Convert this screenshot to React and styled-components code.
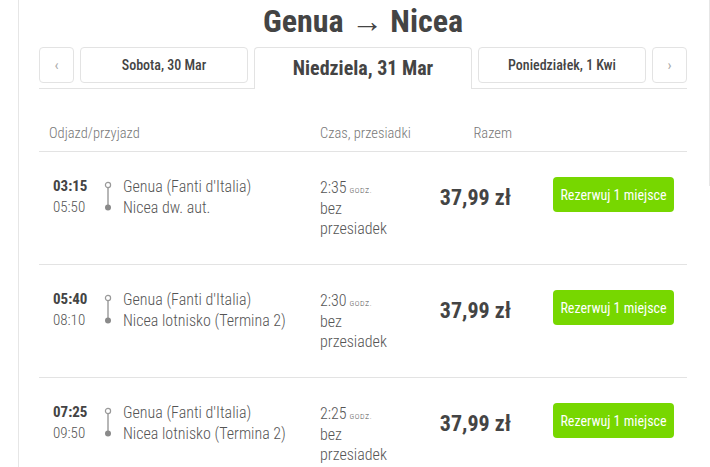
import React from "react";
import styled, { createGlobalStyle } from "styled-components";

const Global = createGlobalStyle`
  html, body { margin: 0; padding: 0; background: #fff; }
  body {
    font-family: "Roboto Condensed", Roboto, "Liberation Sans", sans-serif;
    font-stretch: condensed;
    color: #444;
    overflow: hidden;
  }
  * { box-sizing: border-box; }
`;

const Page = styled.div`
  display: flex;
  align-items: flex-start;
  width: 710px;
  height: 467px;
  overflow: hidden;
`;

const Main = styled.main`
  margin-left: 18px;
  width: 691px;
  height: 467px;
  border-left: 1px solid #e6e6e6;
  padding: 0 22px 0 20px;
`;

const Side = styled.aside`
  width: 12px;
  height: 186px;
  border-left: 1px solid #e6e6e6;
  border-bottom: 1px solid #e6e6e6;
  border-bottom-left-radius: 4px;
`;

const Title = styled.h1`
  margin: 0;
  padding-top: 2px;
  height: 47px;
  text-align: center;
  font-size: 32px;
  line-height: 38px;
  font-weight: 700;
  color: #444;
`;

const Tabs = styled.div`
  display: flex;
  gap: 6px;
  align-items: flex-start;
  border-bottom: 1px solid #e3e3e3;
  height: 42px;
`;

const Tab = styled.button`
  font-family: inherit;
  font-stretch: condensed;
  background: #fff;
  border: 1px solid #e3e3e3;
  border-radius: 4px;
  height: 36px;
  width: ${(p) => p.$w}px;
  flex: none;
  padding: 0;
  color: ${(p) => (p.$arrow ? "#aaa" : "#444")};
  font-size: ${(p) => (p.$arrow ? 15 : 14)}px;
  font-weight: ${(p) => (p.$arrow ? 400 : 500)};
  cursor: pointer;
`;

const ActiveTab = styled.div`
  width: 218px;
  flex: none;
  height: 42px;
  margin-bottom: -1px;
  background: #fff;
  border: 1px solid #e3e3e3;
  border-bottom: none;
  border-radius: 4px 4px 0 0;
  display: flex;
  align-items: center;
  justify-content: center;
  font-size: 20px;
  font-weight: 700;
  color: #444;
  padding-bottom: 1px;
`;

const Head = styled.div`
  display: grid;
  grid-template-columns: 271px 112px 80px 1fr;
  margin-top: 37px;
  padding: 0 9px 0 10px;
  height: 26px;
  border-bottom: 1px solid #e3e3e3;
  font-size: 14.5px;
  font-weight: 300;
  color: #777;
  line-height: 16px;
  & > span:nth-child(3) { text-align: right; }
`;

const Row = styled.div`
  display: grid;
  grid-template-columns: 267px 116px 75px 1fr;
  align-items: start;
  padding: 24px 13px 0 14px;
  height: 113px;
  border-bottom: 1px solid #e3e3e3;
`;

const Route = styled.div`
  display: flex;
  align-items: flex-start;
`;

const Times = styled.div`
  width: 46px;
  font-size: 15px;
  line-height: 21px;
  font-weight: 300;
  color: #555;
  & > b { font-weight: 700; color: #444; display: block; }
`;

const Connector = styled.svg`
  flex: none;
  margin: 5px 0 0 5px;
  width: 8px;
  height: 31px;
`;

const Stations = styled.div`
  margin-left: 11px;
  font-size: 16px;
  line-height: 21px;
  font-weight: 300;
  color: #555;
  white-space: nowrap;
`;

const Duration = styled.div`
  margin-top: 2px;
  font-size: 16px;
  line-height: 20.5px;
  font-weight: 300;
  color: #555;
  & small {
    font-size: 8px;
    line-height: 0;
    font-stretch: normal;
    text-transform: uppercase;
    margin-left: 3px;
    letter-spacing: 0.5px;
  }
`;

const Price = styled.div`
  text-align: right;
  font-size: 22px;
  font-weight: 700;
  line-height: 44px;
  color: #444;
  white-space: nowrap;
`;

const Book = styled.button`
  justify-self: end;
  margin-top: 1px;
  width: 121px;
  height: 35px;
  border: none;
  border-radius: 4px;
  background: #77d700;
  color: #fff;
  font-family: inherit;
  font-stretch: condensed;
  font-size: 14px;
  font-weight: 400;
  padding: 0;
  cursor: pointer;
`;

const rides = [
  { dep: "03:15", arr: "05:50", from: "Genua (Fanti d'Italia)", to: "Nicea dw. aut.", dur: "2:35" },
  { dep: "05:40", arr: "08:10", from: "Genua (Fanti d'Italia)", to: "Nicea lotnisko (Termina 2)", dur: "2:30" },
  { dep: "07:25", arr: "09:50", from: "Genua (Fanti d'Italia)", to: "Nicea lotnisko (Termina 2)", dur: "2:25" },
];

export default function App() {
  return (
    <>
      <Global />
      <Page>
        <Main>
          <Title>Genua → Nicea</Title>
          <Tabs>
            <Tab $w={35} $arrow>‹</Tab>
            <Tab $w={168}>Sobota, 30 Mar</Tab>
            <ActiveTab>Niedziela, 31 Mar</ActiveTab>
            <Tab $w={168}>Poniedziałek, 1 Kwi</Tab>
            <Tab $w={35} $arrow>›</Tab>
          </Tabs>
          <Head>
            <span>Odjazd/przyjazd</span>
            <span>Czas, przesiadki</span>
            <span>Razem</span>
            <span />
          </Head>
          {rides.map((r) => (
            <Row key={r.dep}>
              <Route>
                <Times>
                  <b>{r.dep}</b>
                  {r.arr}
                </Times>
                <Connector viewBox="0 0 8 31">
                  <circle cx="4" cy="4" r="2.6" fill="#fff" stroke="#999" strokeWidth="1.2" />
                  <line x1="4" y1="6.6" x2="4" y2="25" stroke="#999" strokeWidth="1.4" />
                  <circle cx="4" cy="26.5" r="3" fill="#8a8a8a" />
                </Connector>
                <Stations>
                  {r.from}
                  <br />
                  {r.to}
                </Stations>
              </Route>
              <Duration>
                {r.dur}
                <small>godz.</small>
                <br />
                bez
                <br />
                przesiadek
              </Duration>
              <Price>37,99 zł</Price>
              <Book>Rezerwuj 1 miejsce</Book>
            </Row>
          ))}
        </Main>
        <Side />
      </Page>
    </>
  );
}
